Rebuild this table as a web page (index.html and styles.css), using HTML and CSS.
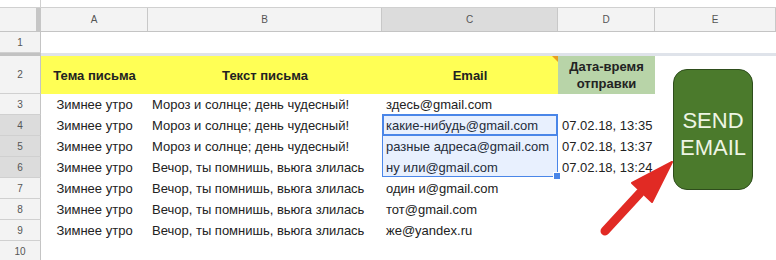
FILE: index.html
```html
<!DOCTYPE html>
<html>
<head>
<meta charset="utf-8">
<link rel="stylesheet" href="styles.css">
</head>
<body>
<div class="sheet">
  <div class="formula"><span class="fx"></span><span class="ftext"></span></div>
  <div class="row colhead">
    <div class="corner"></div>
    <div class="ch">A</div>
    <div class="ch">B</div>
    <div class="ch sel">C</div>
    <div class="ch">D</div>
    <div class="ch">E</div>
  </div>
  <div class="row r1">
    <div class="rh">1</div>
    <div class="c"></div><div class="c"></div><div class="c"></div><div class="c"></div><div class="c"></div>
  </div>
  <div class="row freeze">
    <div class="fz-h"></div><div class="fz-c"></div>
  </div>
  <div class="row r2">
    <div class="rh">2</div>
    <div class="c hd yel">Тема письма</div>
    <div class="c hd yel">Текст письма</div>
    <div class="c hd yel note">Email</div>
    <div class="c hd grn">Дата-время<br>отправки</div>
    <div class="c"></div>
  </div>
  <div class="row">
    <div class="rh">3</div>
    <div class="c ctr">Зимнее утро</div>
    <div class="c">Мороз и солнце; день чудесный!</div>
    <div class="c">здесь@gmail.com</div>
    <div class="c"></div><div class="c"></div>
  </div>
  <div class="row">
    <div class="rh sel">4</div>
    <div class="c ctr">Зимнее утро</div>
    <div class="c">Мороз и солнце; день чудесный!</div>
    <div class="c">какие-нибудь@gmail.com</div>
    <div class="c">07.02.18, 13:35</div><div class="c"></div>
  </div>
  <div class="row">
    <div class="rh sel">5</div>
    <div class="c ctr">Зимнее утро</div>
    <div class="c">Мороз и солнце; день чудесный!</div>
    <div class="c">разные адреса@gmail.com</div>
    <div class="c">07.02.18, 13:37</div><div class="c"></div>
  </div>
  <div class="row">
    <div class="rh sel">6</div>
    <div class="c ctr">Зимнее утро</div>
    <div class="c">Вечор, ты помнишь, вьюга злилась</div>
    <div class="c">ну или@gmail.com</div>
    <div class="c">07.02.18, 13:24</div><div class="c"></div>
  </div>
  <div class="row">
    <div class="rh">7</div>
    <div class="c ctr">Зимнее утро</div>
    <div class="c">Вечор, ты помнишь, вьюга злилась</div>
    <div class="c">один и@gmail.com</div>
    <div class="c"></div><div class="c"></div>
  </div>
  <div class="row">
    <div class="rh">8</div>
    <div class="c ctr">Зимнее утро</div>
    <div class="c">Вечор, ты помнишь, вьюга злилась</div>
    <div class="c">тот@gmail.com</div>
    <div class="c"></div><div class="c"></div>
  </div>
  <div class="row">
    <div class="rh">9</div>
    <div class="c ctr">Зимнее утро</div>
    <div class="c">Вечор, ты помнишь, вьюга злилась</div>
    <div class="c">же@yandex.ru</div>
    <div class="c"></div><div class="c"></div>
  </div>
  <div class="row">
    <div class="rh">10</div>
    <div class="c"></div><div class="c"></div><div class="c"></div><div class="c"></div><div class="c"></div>
  </div>

  <div class="selection"><div class="active"></div><div class="handle"></div></div>
  <div class="send">SEND<br>EMAIL</div>
  <svg class="arrow" width="100" height="100" viewBox="0 0 100 100">
    <line x1="19" y1="81" x2="54" y2="43" stroke="#e12a24" stroke-width="9" stroke-linecap="round"/>
    <polygon points="86,12 46,33 66,52" fill="#e12a24" stroke="#e12a24" stroke-width="2" stroke-linejoin="round"/>
  </svg>
</div>
</body>
</html>
```
FILE: styles.css
```css
html, body {
  margin: 0;
  padding: 0;
  background: #fff;
}
.sheet {
  position: relative;
  width: 776px;
  height: 260px;
  overflow: hidden;
  font-family: "Liberation Sans", Arial, sans-serif;
  color: #222;
}
.formula {
  height: 7px;
  border-bottom: 1px solid #d0d0d0;
  display: flex;
}
.fx {
  width: 41px;
  box-sizing: border-box;
  border-right: 1px solid #d0d0d0;
}
.ftext {
  flex: 1;
}
.row {
  display: grid;
  grid-template-columns: 41px 107px 234px 176px 97px 121px;
  height: 21px;
}
.colhead {
  height: 23px;
  background: #f3f3f3;
  border-bottom: 1px solid #c4c4c4;
}
.corner {
  background: #f3f3f3;
  border-right: 5px solid #c6c6c6;
}
.ch {
  font-size: 10px;
  color: #555;
  display: flex;
  align-items: center;
  justify-content: center;
  border-right: 1px solid #c8c8c8;
}
.ch.sel {
  background: #dcdcdc;
}
.rh {
  background: #f3f3f3;
  box-sizing: border-box;
  border-right: 1px solid #c4c4c4;
  border-bottom: 1px solid #d0d0d0;
  font-size: 10px;
  color: #555;
  display: flex;
  align-items: center;
  justify-content: center;
}
.rh.sel {
  background: #dcdcdc;
}
.c {
  font-size: 13px;
  display: flex;
  align-items: center;
  padding-left: 4px;
  white-space: nowrap;
}
.ctr {
  justify-content: center;
  padding-left: 0;
}
.freeze {
  height: 3px;
  grid-template-columns: 41px 1fr;
}
.fz-h { background: #c2c2c2; }
.fz-c { background: #dfe3ea; }
.r2 {
  height: 38px;
}
.hd {
  font-weight: bold;
  justify-content: center;
  text-align: center;
  padding-left: 0;
  line-height: 17px;
}
.yel { background: #ffff55; }
.grn { background: #b8d4a8; }
.note { position: relative; }
.note::after {
  content: "";
  position: absolute;
  top: 0;
  right: 0;
  border-top: 6px solid #e8a020;
  border-left: 6px solid transparent;
}
.selection {
  position: absolute;
  left: 382px;
  top: 114px;
  width: 176px;
  height: 63px;
  box-sizing: border-box;
  border: 1px solid #4a86e8;
  background: rgba(66, 133, 244, 0.12);
}
.active {
  position: absolute;
  left: -1px;
  top: -1px;
  width: 176px;
  height: 22px;
  box-sizing: border-box;
  border: 2px solid #4a86e8;
}
.handle {
  position: absolute;
  right: -4px;
  bottom: -4px;
  width: 6px;
  height: 6px;
  background: #4a86e8;
  border: 1px solid #fff;
}
.send {
  position: absolute;
  left: 673px;
  top: 69px;
  width: 80px;
  height: 121px;
  box-sizing: border-box;
  background: #4b7a2c;
  border: 1px solid #2e4d1c;
  border-radius: 14px;
  color: #eef5e4;
  font-size: 22px;
  line-height: 27px;
  display: flex;
  align-items: center;
  justify-content: center;
  text-align: center;
  padding-top: 9px;
}
.arrow {
  position: absolute;
  left: 586px;
  top: 150px;
}
```
